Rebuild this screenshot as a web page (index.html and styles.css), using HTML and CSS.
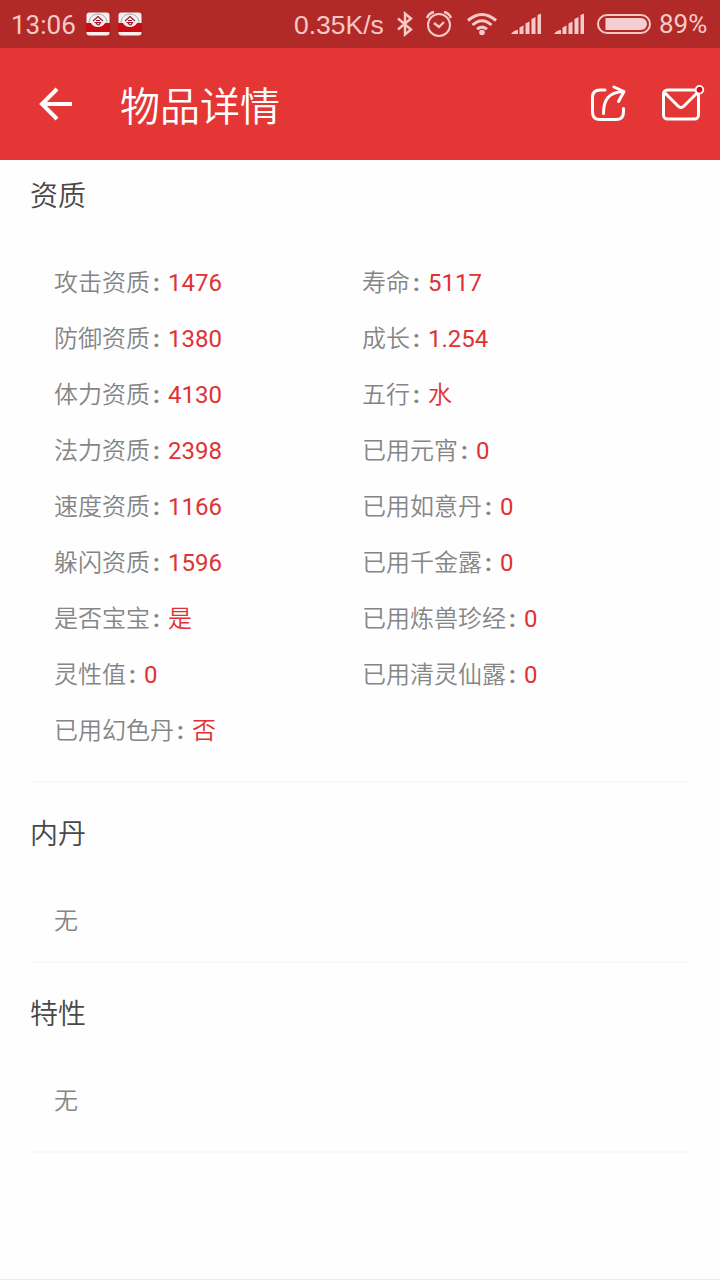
FILE: index.html
```html
<!DOCTYPE html>
<html lang="zh-CN">
<head>
    <meta charset="UTF-8">
    <meta name="viewport" content="width=device-width, initial-scale=1.0">
    <title>物品详情</title>
    <link rel="stylesheet" href="styles.css">
</head>
<body>
    <div class="status-bar">
        <span class="time">13:06</span>
        <svg class="app-icon" width="24" height="24" viewBox="0 0 24 24">
            <rect x="0.5" y="0.5" width="23" height="23" rx="3" fill="#fbeeee"/>
            <path d="M3 11C3-1 21-1 21 11" fill="none" stroke="#91b5a8" stroke-width="1"/>
            <path d="M0 11h5q2 4 7 4t7-4h5v9H0z" fill="#c90b13"/>
            <path d="M7 9l5-4.500L17 9M10 8.500h4M8.500 10.500h6l-2 3M10 11l2 2" fill="none" stroke="#981c29" stroke-width="1.200"/>
        </svg>
        <svg class="app-icon" width="24" height="24" viewBox="0 0 24 24">
            <rect x="0.5" y="0.5" width="23" height="23" rx="3" fill="#fbeeee"/>
            <path d="M3 11C3-1 21-1 21 11" fill="none" stroke="#91b5a8" stroke-width="1"/>
            <path d="M0 11h5q2 4 7 4t7-4h5v9H0z" fill="#c90b13"/>
            <path d="M7 9l5-4.500L17 9M10 8.500h4M8.500 10.500h6l-2 3M10 11l2 2" fill="none" stroke="#981c29" stroke-width="1.200"/>
        </svg>
        <span class="speed">0.35K/s</span>
        <svg class="bluetooth" width="18" height="26" viewBox="0 0 18 26">
            <path d="M2 7.500l13 11L9 23.500V2.500l6 5-13 11" fill="none" stroke="#f7c9c7" stroke-width="2.400"/>
        </svg>
        <svg class="alarm" width="28" height="28" viewBox="0 0 28 28">
            <g fill="none" stroke="#f7c9c7" stroke-width="2">
                <circle cx="14" cy="15" r="11"/>
                <path d="M9 13l5 4 5-5M2 8q2-5 7-6M19 2q5 1 7 6" stroke-width="2.400"/>
            </g>
        </svg>
        <svg class="wifi" width="32" height="24" viewBox="0 0 32 24">
            <g fill="none" stroke="#f7c9c7" stroke-width="3">
                <path d="M2 8.500Q16-3.500 30 8.500M6.500 13Q16 4.500 25.500 13M11 17.200Q16 13 21 17.200"/>
            </g>
            <circle cx="16" cy="20.500" r="2.800" fill="#f7c9c7"/>
        </svg>
        <svg class="signal" width="31" height="22" viewBox="0 0 31 22">
            <path d="M0 21q3-4 7-4v4zM8.500 14.500l4-2V21h-4zM14.500 10.500l4-2V21h-4zM20.500 6l4-2v17h-4zM26.500 2l3.500-1.500V21h-3.500z" fill="#f7c9c7"/>
        </svg>
        <svg class="signal" width="31" height="22" viewBox="0 0 31 22">
            <path d="M0 21q3-4 7-4v4zM8.500 14.500l4-2V21h-4zM14.500 10.500l4-2V21h-4zM20.500 6l4-2v17h-4zM26.500 2l3.500-1.500V21h-3.500z" fill="#f7c9c7"/>
        </svg>
        <svg class="battery" width="54" height="20" viewBox="0 0 54 20">
            <rect x="1" y="1" width="52" height="18" rx="9" fill="none" stroke="#f7c9c7" stroke-width="2"/>
            <path d="M8.500 4H44a6 6 0 0 1 0 12H8.500z" fill="#f3cfd1"/>
        </svg>
        <span class="percent">89%</span>
    </div>

    <div class="header">
        <svg class="back" width="34" height="34" viewBox="0 0 34 34">
            <path d="M18 2L3 17l15 15M3 17h30" fill="none" stroke="#fff" stroke-width="4"/>
        </svg>
        <h1>物品详情</h1>
        <svg class="share" width="38" height="38" viewBox="0 0 38 38">
            <g fill="none" stroke="#fff" stroke-width="3" stroke-linecap="round" stroke-linejoin="round">
                <path d="M15 5H10Q2.500 5 2.500 12.500V27Q2.500 34.500 10 34.500H26Q33.500 34.500 33.500 27V23.500"/>
                <path d="M13.500 28.500C13.500 14 19 7.500 33 6.500M24 2l10 4.500-5.500 10"/>
            </g>
        </svg>
        <svg class="mail" width="44" height="38" viewBox="0 0 44 38">
            <rect x="2.500" y="5" width="35" height="29" rx="4" fill="none" stroke="#fff" stroke-width="3"/>
            <path d="M4 8l13 13q3 3 6 0L36 8" fill="none" stroke="#fff" stroke-width="3"/>
            <circle cx="38.500" cy="4.700" r="3.800" fill="#e60012" stroke="#fff" stroke-width="1.800"/>
        </svg>
    </div>

    <div class="content">
        <div class="section">
            <h2>资质</h2>
            <div class="columns">
                <ul>
                    <li>攻击资质<i>:</i><b>1476</b></li>
                    <li>防御资质<i>:</i><b>1380</b></li>
                    <li>体力资质<i>:</i><b>4130</b></li>
                    <li>法力资质<i>:</i><b>2398</b></li>
                    <li>速度资质<i>:</i><b>1166</b></li>
                    <li>躲闪资质<i>:</i><b>1596</b></li>
                    <li>是否宝宝<i>:</i><b class="word">是</b></li>
                    <li>灵性值<i>:</i><b>0</b></li>
                    <li>已用幻色丹<i>:</i><b class="word">否</b></li>
                </ul>
                <ul>
                    <li>寿命<i>:</i><b>5117</b></li>
                    <li>成长<i>:</i><b>1.254</b></li>
                    <li>五行<i>:</i><b class="word">水</b></li>
                    <li>已用元宵<i>:</i><b>0</b></li>
                    <li>已用如意丹<i>:</i><b>0</b></li>
                    <li>已用千金露<i>:</i><b>0</b></li>
                    <li>已用炼兽珍经<i>:</i><b>0</b></li>
                    <li>已用清灵仙露<i>:</i><b>0</b></li>
                </ul>
            </div>
        </div>
        <div class="section small">
            <h2>内丹</h2>
            <p>无</p>
        </div>
        <div class="section small last">
            <h2>特性</h2>
            <p>无</p>
        </div>
    </div>
</body>
</html>
```
FILE: styles.css
```css
* {
	box-sizing: border-box;
}

body {
	margin: 0;
	height: 1280px;
	display: flex;
	flex-direction: column;
	font-family: Roboto, "Noto Sans CJK SC", sans-serif;
	font-weight: 350;
	background-color: #fefefe;
	color: #858585;
	border-bottom: 1px solid #ececec;
}

svg {
	display: block;
	flex: none;
}

.status-bar {
	height: 48px;
	padding-left: 11px;
	display: flex;
	align-items: center;
	background-color: #b22a28;
	color: #f7c9c7;
	font-size: 26px;
	font-weight: 400;
	white-space: nowrap;
}

.time {
	width: 75px;
	padding-top: 2px;
}

.app-icon {
	margin-right: 8px;
}

.speed {
	width: 102px;
	margin-left: 144px;
	padding-top: 2px;
	font-family: "Liberation Sans", sans-serif;
	font-size: 26.5px;
}

.bluetooth {
	margin-right: 11px;
}

.alarm {
	margin-right: 13px;
}

.wifi {
	margin-right: 13px;
}

.signal {
	margin-right: 12px;
}

.battery {
	margin-right: 8px;
}

.header {
	height: 112px;
	padding: 0 15px 0 39px;
	display: flex;
	align-items: center;
	background-color: #e53636;
	color: #fff;
}

h1 {
	flex: 1;
	margin: 0 0 0 47px;
	font-size: 40px;
	font-weight: 350;
}

.share {
	margin-right: 33px;
}

.content {
	padding: 0 30px;
}

.section {
	height: 623px;
	padding-top: 17px;
	border-bottom: 2px solid #f9f9f9;
}

h2 {
	margin: 0;
	height: 40px;
	line-height: 40px;
	font-size: 28px;
	font-weight: 350;
	color: #484848;
}

.columns {
	display: flex;
	padding: 38px 0 0 24px;
}

ul {
	width: 308px;
	margin: 0;
	padding: 0;
	list-style: none;
}

li,
p {
	height: 56px;
	line-height: 56px;
	font-size: 24px;
	white-space: nowrap;
}

li i {
	display: inline-block;
	width: 18px;
	padding-left: 3px;
	font-style: normal;
	font-weight: 700;
}

li b {
	font-weight: 400;
	color: #e03236;
}

li .word {
	font-weight: 350;
}

.small {
	height: 180px;
	padding-top: 32px;
}

.small p {
	margin: 38px 0 0 24px;
}

.last {
	height: 190px;
}
```
